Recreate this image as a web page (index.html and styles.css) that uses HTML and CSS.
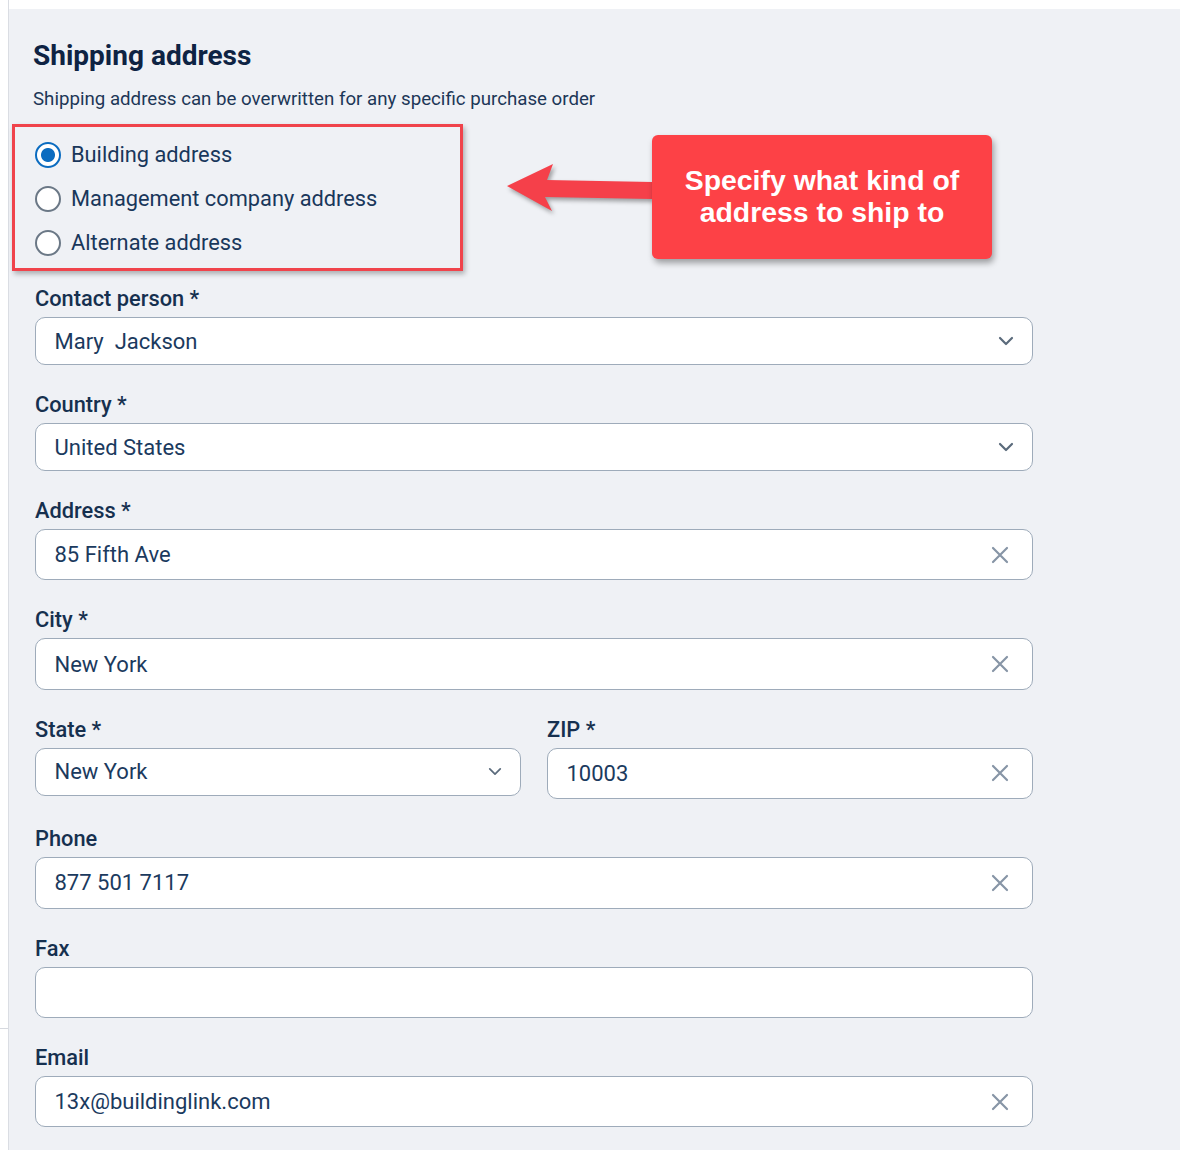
FILE: index.html
```html
<!DOCTYPE html>
<html lang="en">
<head>
<meta charset="utf-8">
<title>Shipping address</title>
<link rel="stylesheet" href="styles.css">
</head>
<body>
<div class="page">
  <div class="gutter"><div class="gutter-line"></div></div>
  <main class="panel">
    <h1 class="title">Shipping address</h1>
    <p class="subtitle">Shipping address can be overwritten for any specific purchase order</p>

    <div class="radio-box">
      <label class="radio-row"><span class="radio checked"></span><span class="radio-label">Building address</span></label>
      <label class="radio-row"><span class="radio"></span><span class="radio-label">Management company address</span></label>
      <label class="radio-row"><span class="radio"></span><span class="radio-label">Alternate address</span></label>
    </div>

    <div class="field first">
      <div class="label">Contact person *</div>
      <div class="input select"><span class="value">Mary&nbsp; Jackson</span>
        <svg class="chev" viewBox="0 0 16 10" width="16" height="10"><path d="M2 2 L8 8 L14 2" fill="none" stroke="#5b6b7c" stroke-width="2.2" stroke-linecap="round" stroke-linejoin="round"/></svg>
      </div>
    </div>

    <div class="field">
      <div class="label">Country *</div>
      <div class="input select"><span class="value">United States</span>
        <svg class="chev" viewBox="0 0 16 10" width="16" height="10"><path d="M2 2 L8 8 L14 2" fill="none" stroke="#5b6b7c" stroke-width="2.2" stroke-linecap="round" stroke-linejoin="round"/></svg>
      </div>
    </div>

    <div class="field">
      <div class="label">Address *</div>
      <div class="input text"><span class="value">85 Fifth Ave</span>
        <svg class="clear" viewBox="0 0 18 18" width="18" height="18"><path d="M2 2 L16 16 M16 2 L2 16" stroke="#8795a6" stroke-width="2.2" stroke-linecap="round"/></svg>
      </div>
    </div>

    <div class="field">
      <div class="label">City *</div>
      <div class="input text"><span class="value">New York</span>
        <svg class="clear" viewBox="0 0 18 18" width="18" height="18"><path d="M2 2 L16 16 M16 2 L2 16" stroke="#8795a6" stroke-width="2.2" stroke-linecap="round"/></svg>
      </div>
    </div>

    <div class="field-row">
      <div class="field half">
        <div class="label">State *</div>
        <div class="input select"><span class="value">New York</span>
          <svg class="chev small" viewBox="0 0 16 10" width="14" height="9"><path d="M2 2 L8 8 L14 2" fill="none" stroke="#5b6b7c" stroke-width="2" stroke-linecap="round" stroke-linejoin="round"/></svg>
        </div>
      </div>
      <div class="field half">
        <div class="label">ZIP *</div>
        <div class="input text"><span class="value">10003</span>
          <svg class="clear" viewBox="0 0 18 18" width="18" height="18"><path d="M2 2 L16 16 M16 2 L2 16" stroke="#8795a6" stroke-width="2.2" stroke-linecap="round"/></svg>
        </div>
      </div>
    </div>

    <div class="field">
      <div class="label">Phone</div>
      <div class="input text"><span class="value">877 501 7117</span>
        <svg class="clear" viewBox="0 0 18 18" width="18" height="18"><path d="M2 2 L16 16 M16 2 L2 16" stroke="#8795a6" stroke-width="2.2" stroke-linecap="round"/></svg>
      </div>
    </div>

    <div class="field">
      <div class="label">Fax</div>
      <div class="input text"><span class="value"></span></div>
    </div>

    <div class="field">
      <div class="label">Email</div>
      <div class="input text"><span class="value">13x@buildinglink.com</span>
        <svg class="clear" viewBox="0 0 18 18" width="18" height="18"><path d="M2 2 L16 16 M16 2 L2 16" stroke="#8795a6" stroke-width="2.2" stroke-linecap="round"/></svg>
      </div>
    </div>
  </main>

  <svg class="arrow" viewBox="0 0 160 60" width="160" height="60">
    <polygon points="150,22 45,20 51,4 5,26 50,51 43,37 150,39" fill="#f5404a"/>
  </svg>
  <div class="callout">Specify what kind of<br>address to ship to</div>
</div>
</body>
</html>
```

FILE: styles.css
```css
* { box-sizing: border-box; }

html, body {
  margin: 0;
  padding: 0;
  background: #ffffff;
}

body {
  font-family: Roboto, "Noto Sans", "Liberation Sans", sans-serif;
  width: 1180px;
  height: 1150px;
  overflow: hidden;
}

.page {
  position: relative;
  display: flex;
  width: 1180px;
  height: 1150px;
  padding-top: 9px;
}

.gutter {
  width: 9px;
  flex: 0 0 9px;
  padding-top: 1028px;
  border-right: 1px solid #dadde3;
  margin-top: -9px;
}

.gutter-line {
  height: 1px;
  background: #d6d9df;
}

.panel {
  flex: 1;
  background: #eff1f5;
  padding: 31px 24px 0 24px;
  display: flex;
  flex-direction: column;
}

.title {
  margin: 0;
  font-size: 28px;
  line-height: 32px;
  font-weight: 700;
  color: #0e2343;
}

.subtitle {
  margin: 15px 0 0 0;
  font-size: 18.7px;
  line-height: 24px;
  color: #1d3757;
}

.radio-box {
  margin: 13px 0 0 -21px;
  width: 451px;
  border: 3px solid #f0434b;
  padding: 6px 0 3px 20px;
  box-shadow: 2px 3px 5px rgba(0, 0, 0, 0.28);
  display: flex;
  flex-direction: column;
}

.radio-row {
  height: 44px;
  display: flex;
  align-items: center;
  gap: 10px;
}

.radio {
  width: 26px;
  height: 26px;
  border-radius: 50%;
  border: 2.5px solid #6b7886;
  background: #ffffff;
  flex: 0 0 26px;
}

.radio.checked {
  border: 2.5px solid #0b6cc0;
  background: radial-gradient(circle, #0b6cc0 0 6.5px, #ffffff 7.5px);
}

.radio-label {
  font-size: 21.8px;
  line-height: 26px;
  color: #19375b;
}

.field {
  margin-top: 28px;
  margin-left: 2px;
  display: flex;
  flex-direction: column;
}

.field.first {
  margin-top: 16px;
}

.label {
  font-size: 21.8px;
  line-height: 24px;
  font-weight: 500;
  color: #16304f;
  margin-bottom: 6px;
}

.input {
  width: 998px;
  background: #ffffff;
  border: 1.5px solid #9eabba;
  border-radius: 10px;
  display: flex;
  align-items: center;
  justify-content: space-between;
  padding: 0 18px 0 18.5px;
}

.input.select {
  height: 48px;
}

.input.text {
  height: 51.4px;
  padding-right: 23px;
}

.value {
  font-size: 22px;
  color: #1b3a5e;
}

.chev {
  display: block;
}

.clear {
  display: block;
}

.field-row {
  display: flex;
  gap: 26px;
  align-items: flex-start;
  margin-left: 2px;
}

.field-row .field {
  width: 486px;
  margin-left: 0;
}

.field-row .input {
  width: 486px;
}

.arrow {
  position: absolute;
  left: 502px;
  top: 160px;
  filter: drop-shadow(2px 3px 2px rgba(0, 0, 0, 0.35));
}

.callout {
  position: absolute;
  left: 652px;
  top: 135px;
  width: 340px;
  height: 124px;
  background: #fd4146;
  border-radius: 6px;
  box-shadow: 2px 4px 6px rgba(0, 0, 0, 0.35);
  color: #ffffff;
  font-family: "Liberation Sans", Arial, sans-serif;
  font-weight: 700;
  font-size: 28.4px;
  line-height: 32px;
  text-align: center;
  padding-top: 29px;
}
```
